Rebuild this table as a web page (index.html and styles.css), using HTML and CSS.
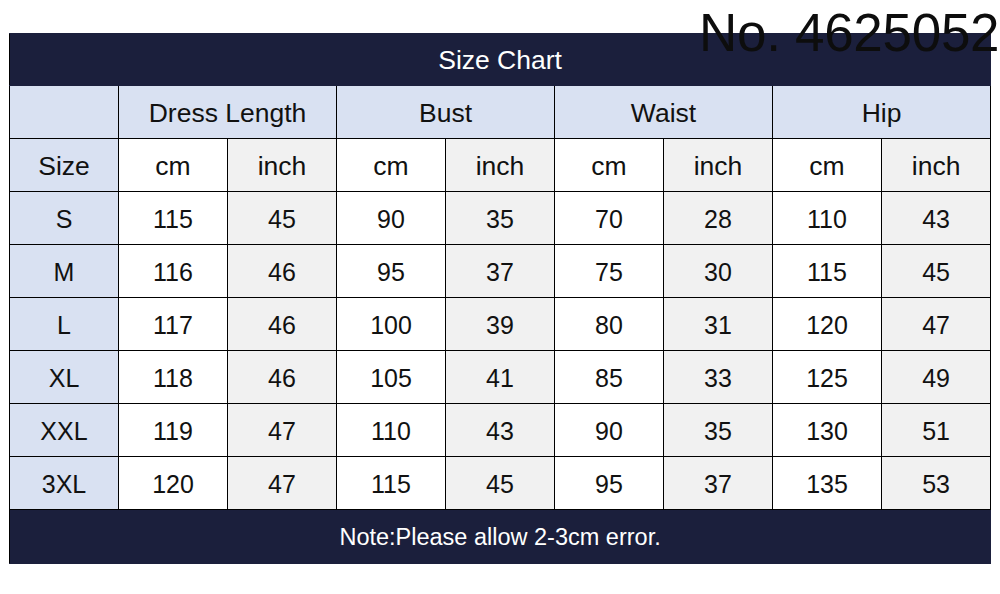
FILE: index.html
```html
<!DOCTYPE html>
<html>
<head>
<meta charset="utf-8">
<link rel="stylesheet" href="styles.css">
</head>
<body>
<div class="page">
  <div class="code">No. 4625052</div>
  <table class="chart">
    <colgroup>
      <col><col><col><col><col><col><col><col><col>
    </colgroup>
    <tr class="title"><td colspan="9">Size Chart</td></tr>
    <tr class="group">
      <td class="hd"></td>
      <td class="hd" colspan="2">Dress Length</td>
      <td class="hd" colspan="2">Bust</td>
      <td class="hd" colspan="2">Waist</td>
      <td class="hd" colspan="2">Hip</td>
    </tr>
    <tr class="units">
      <td class="hd">Size</td>
      <td>cm</td><td class="alt">inch</td>
      <td>cm</td><td class="alt">inch</td>
      <td>cm</td><td class="alt">inch</td>
      <td>cm</td><td class="alt">inch</td>
    </tr>
    <tr class="data"><td class="hd">S</td><td>115</td><td class="alt">45</td><td>90</td><td class="alt">35</td><td>70</td><td class="alt">28</td><td>110</td><td class="alt">43</td></tr>
    <tr class="data"><td class="hd">M</td><td>116</td><td class="alt">46</td><td>95</td><td class="alt">37</td><td>75</td><td class="alt">30</td><td>115</td><td class="alt">45</td></tr>
    <tr class="data"><td class="hd">L</td><td>117</td><td class="alt">46</td><td>100</td><td class="alt">39</td><td>80</td><td class="alt">31</td><td>120</td><td class="alt">47</td></tr>
    <tr class="data"><td class="hd">XL</td><td>118</td><td class="alt">46</td><td>105</td><td class="alt">41</td><td>85</td><td class="alt">33</td><td>125</td><td class="alt">49</td></tr>
    <tr class="data"><td class="hd">XXL</td><td>119</td><td class="alt">47</td><td>110</td><td class="alt">43</td><td>90</td><td class="alt">35</td><td>130</td><td class="alt">51</td></tr>
    <tr class="data"><td class="hd">3XL</td><td>120</td><td class="alt">47</td><td>115</td><td class="alt">45</td><td>95</td><td class="alt">37</td><td>135</td><td class="alt">53</td></tr>
    <tr class="note"><td colspan="9">Note:Please allow 2-3cm error.</td></tr>
  </table>
</div>
</body>
</html>
```

FILE: styles.css
```css
html, body {
  margin: 0;
  padding: 0;
  background: #ffffff;
}

.page {
  position: relative;
  width: 1000px;
  height: 594px;
  padding-top: 33px;
  padding-left: 9px;
  box-sizing: border-box;
  font-family: "Liberation Sans", Arial, sans-serif;
}

.code {
  position: absolute;
  top: 3px;
  left: 699px;
  font-size: 53px;
  line-height: 60px;
  color: #0d0d0d;
  letter-spacing: -0.3px;
  z-index: 2;
  white-space: nowrap;
}

.chart {
  border-collapse: collapse;
  table-layout: fixed;
  width: 982px;
  color: #111111;
}

.chart col {
  width: 109px;
}

.chart td {
  border: 1px solid #000000;
  text-align: center;
  vertical-align: middle;
  padding: 2px 0 0;
  height: 50px;
  font-size: 25px;
  background: #ffffff;
}

.chart td.alt {
  background: #f1f1f1;
}

.chart td.hd {
  background: #d9e1f2;
}

.group td,
.units td {
  font-size: 26.5px;
}

.title td {
  background: #1b1f3c;
  color: #ffffff;
  font-size: 26.5px;
  height: 49px;
  border-color: #1b1f3c;
  border-left-color: #000000;
}

.note td {
  background: #1b1f3c;
  color: #ffffff;
  font-size: 23.5px;
  height: 51px;
  border-color: #1b1f3c;
  border-top-color: #000000;
  border-left-color: #000000;
}
```
